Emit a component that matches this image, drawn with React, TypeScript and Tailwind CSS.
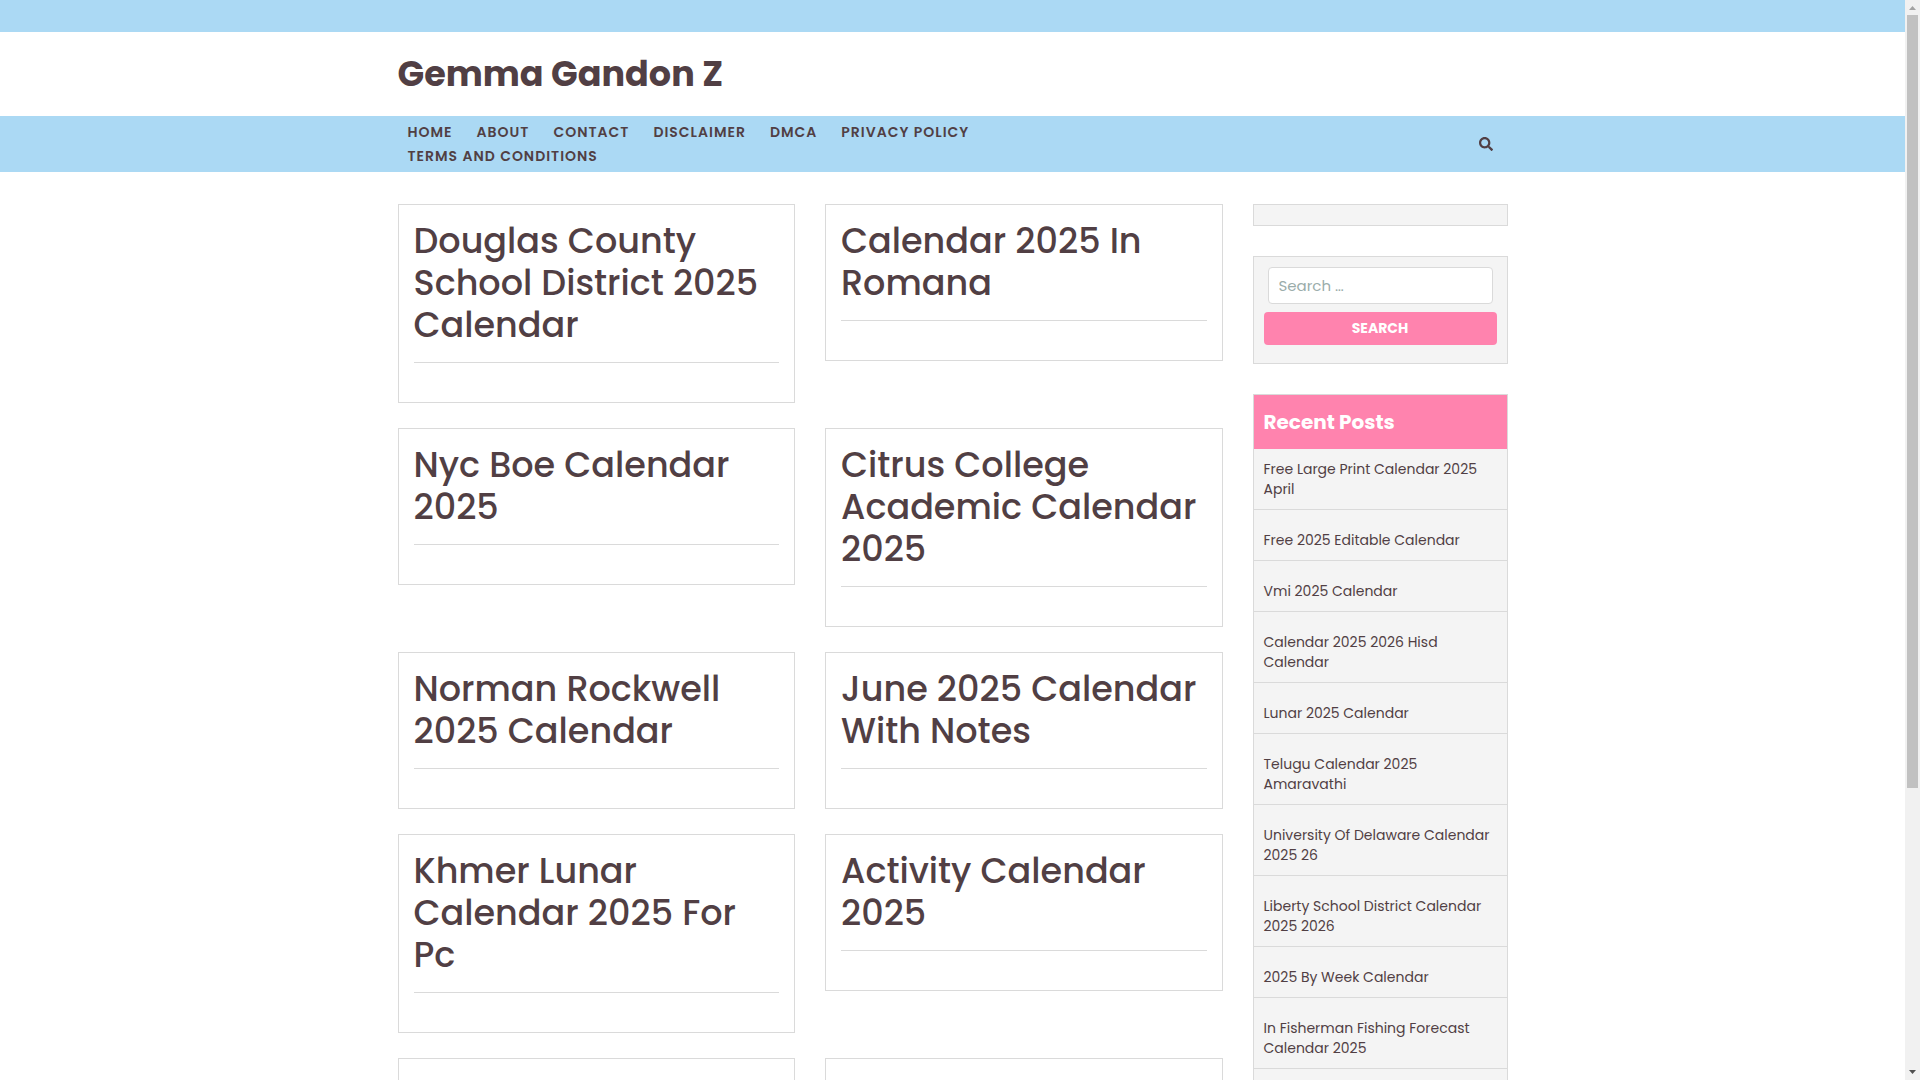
import { FaSearch } from "react-icons/fa";

const links = [
  "Home",
  "About",
  "Contact",
  "Disclaimer",
  "DMCA",
  "Privacy Policy",
  "Terms And Conditions",
];

const posts = [
  "Douglas County School District 2025 Calendar",
  "Calendar 2025 In Romana",
  "Nyc Boe Calendar 2025",
  "Citrus College Academic Calendar 2025",
  "Norman Rockwell 2025 Calendar",
  "June 2025 Calendar With Notes",
  "Khmer Lunar Calendar 2025 For Pc",
  "Activity Calendar 2025",
];

const recent = [
  "Free Large Print Calendar 2025 April",
  "Free 2025 Editable Calendar",
  "Vmi 2025 Calendar",
  "Calendar 2025 2026 Hisd Calendar",
  "Lunar 2025 Calendar",
  "Telugu Calendar 2025 Amaravathi",
  "University Of Delaware Calendar 2025 26",
  "Liberty School District Calendar 2025 2026",
  "2025 By Week Calendar",
  "In Fisherman Fishing Forecast Calendar 2025",
];

const Header = () => {
  return (
    <header>
      <div className="h-8 bg-[#abd9f4]"></div>
      <div className="max-w-[1110px] mx-auto py-[21px]">
        <h1 className="text-[35px] leading-[42px] font-bold">
          <a href="#">Gemma Gandon Z</a>
        </h1>
      </div>
      <nav className="bg-[#abd9f4]">
        <div className="max-w-[1110px] mx-auto py-1 flex justify-between items-center">
          <ul className="w-[640px] flex flex-wrap">
            {links.map((link) => (
              <li key={link} className="pl-2.5 pr-3.5 last:pr-0">
                <a
                  href="#"
                  className="block text-sm leading-6 font-semibold uppercase tracking-[1px]"
                >
                  {link}
                </a>
              </li>
            ))}
          </ul>
          <button aria-label="Open search" className="mr-[15px]">
            <FaSearch className="text-sm" />
          </button>
        </div>
      </nav>
    </header>
  );
};

const PostCard = ({ title }: { title: string }) => {
  return (
    <article className="border border-[#dadada] px-[15px] pt-[15px] pb-[39px]">
      <h2 className="text-[35px] leading-[42px] font-medium">
        <a href="#">{title}</a>
      </h2>
      <hr className="mt-4 border-[#dadada]" />
    </article>
  );
};

const Sidebar = () => {
  return (
    <aside className="w-[255px] shrink-0 flex flex-col gap-[30px]">
      <div className="h-[22px] border border-[#dadada] bg-[#f4f4f4]"></div>

      <form className="border border-[#dadada] bg-[#f4f4f4] px-2.5 pt-2.5 pb-[18px]">
        <label className="block px-1">
          <input
            type="search"
            aria-label="Search for"
            placeholder="Search …"
            className="w-full h-[37px] rounded border border-[#dadada] bg-white px-2.5 text-[15px] placeholder:text-[#9aacaa]"
          />
        </label>
        <button className="mt-2 w-full h-[33px] rounded bg-[#ff83ae] pb-0.5 text-sm font-bold uppercase text-white">
          Search
        </button>
      </form>

      <section className="border border-[#dadada] bg-[#f4f4f4]">
        <h3 className="bg-[#ff83ae] px-2.5 py-3 text-xl leading-[30px] font-bold text-white">
          Recent Posts
        </h3>
        <ul>
          {recent.map((title) => (
            <li
              key={title}
              className="border-b border-[#dadada] px-2.5 pt-5 pb-2.5 text-sm leading-5 first:pt-2.5"
            >
              <a href="#">{title}</a>
            </li>
          ))}
          <li className="h-10"></li>
        </ul>
      </section>
    </aside>
  );
};

const Scrollbar = () => {
  return (
    <div className="w-[15px] shrink-0 bg-[#f1f1f1] flex flex-col items-center">
      <svg className="w-[15px] h-[15px] shrink-0" viewBox="0 0 15 15">
        <path d="M4 10h7L7.5 6z" fill="#a3a3a3" />
      </svg>
      <div className="w-full flex-1">
        <div className="mx-auto w-[11px] h-[73.6%] bg-[#c1c1c1]"></div>
      </div>
      <svg className="w-[15px] h-[15px] shrink-0" viewBox="0 0 15 15">
        <path d="M4 5h7L7.5 9z" fill="#505050" />
      </svg>
    </div>
  );
};

const App = () => {
  return (
    <div className="h-screen flex bg-white font-[Poppins,Inter,sans-serif] text-[#513f44]">
      <div className="flex-1 overflow-hidden">
        <Header />
        <div className="max-w-[1110px] mx-auto mt-8 flex items-start gap-[30px]">
          <main className="flex-1 grid grid-cols-2 items-start gap-x-[30px] gap-y-[25px]">
            {posts.map((title) => (
              <PostCard key={title} title={title} />
            ))}
            <PostCard title="" />
            <PostCard title="" />
          </main>
          <Sidebar />
        </div>
      </div>
      <Scrollbar />
    </div>
  );
};

export default App;
